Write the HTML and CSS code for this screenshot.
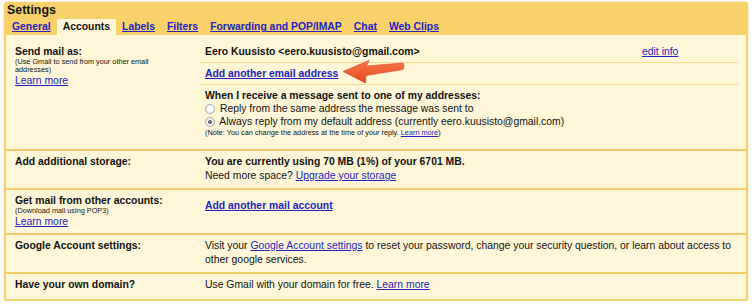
FILE: index.html
```html
<!DOCTYPE html>
<html lang="en">
<head>
  <meta charset="UTF-8">
  <title>Settings - Accounts</title>
  <link rel="stylesheet" href="styles.css">
</head>
<body>
  <div class="settings">
    <div class="settings-title">Settings</div>
    <div class="tabs">
      <a class="tab" href="#">General</a>
      <span class="tab tab-active">Accounts</span>
      <a class="tab" href="#">Labels</a>
      <a class="tab" href="#">Filters</a>
      <a class="tab" href="#">Forwarding and POP/IMAP</a>
      <a class="tab" href="#">Chat</a>
      <a class="tab" href="#">Web Clips</a>
    </div>

    <div class="panel">
      <!-- Send mail as -->
      <div class="row row-send">
        <div class="row-label">
          <div class="label-title">Send mail as:</div>
          <div class="hint">(Use Gmail to send from your other email addresses)</div>
          <a class="label-link" href="#">Learn more</a>
        </div>
        <div class="row-value">
          <div class="sub sub-address">
            <b>Eero Kuusisto &lt;eero.kuusisto@gmail.com&gt;</b>
            <a href="#">edit info</a>
          </div>
          <div class="sub sub-add">
            <a class="strong-link" href="#">Add another email address</a>
          </div>
          <div class="sub sub-reply">
            <div class="reply-title">When I receive a message sent to one of my addresses:</div>
            <label class="radio-line"><input type="radio" name="reply"> Reply from the same address the message was sent to</label>
            <label class="radio-line"><input type="radio" name="reply" checked> Always reply from my default address (currently eero.kuusisto@gmail.com)</label>
            <div class="hint">(Note: You can change the address at the time of your reply. <a href="#">Learn more</a>)</div>
          </div>
        </div>
      </div>

      <!-- Storage -->
      <div class="row">
        <div class="row-label">
          <div class="label-title">Add additional storage:</div>
        </div>
        <div class="row-value">
          <b>You are currently using 70 MB (1%) of your 6701 MB.</b><br>
          Need more space? <a href="#">Upgrade your storage</a>
        </div>
      </div>

      <!-- POP3 -->
      <div class="row">
        <div class="row-label">
          <div class="label-title">Get mail from other accounts:</div>
          <div class="hint">(Download mail using POP3)</div>
          <a class="label-link" href="#">Learn more</a>
        </div>
        <div class="row-value row-value-pop">
          <a class="strong-link" href="#">Add another mail account</a>
        </div>
      </div>

      <!-- Google account -->
      <div class="row">
        <div class="row-label">
          <div class="label-title">Google Account settings:</div>
        </div>
        <div class="row-value">
          <span>Visit your</span> <a href="#">Google Account settings</a> <span>to reset your password, change your security question, or learn about access to other google services.</span>
        </div>
      </div>

      <!-- Domain -->
      <div class="row row-last">
        <div class="row-label">
          <div class="label-title">Have your own domain?</div>
        </div>
        <div class="row-value">
          Use Gmail with your domain for free. <a href="#">Learn more</a>
        </div>
      </div>

      <svg class="callout-arrow" width="64" height="26" viewBox="0 0 64 26">
        <defs>
          <linearGradient id="arrowFill" x1="0" y1="0" x2="0" y2="1">
            <stop offset="0" stop-color="#f8794a"/>
            <stop offset="1" stop-color="#e6461f"/>
          </linearGradient>
        </defs>
        <path d="M1,12.5 L27,1.5 L24.5,7 L61,4 Q63,7 61,10.5 L24,16.5 L23.5,24 Z" fill="url(#arrowFill)" stroke="#d9431d" stroke-width="0.6" stroke-linejoin="round"/>
      </svg>
    </div>
  </div>
</body>
</html>
```

FILE: styles.css
```css
:root {
  --gold: #f9d16b;
  --cream: #fff7d7;
  --rule: #f4cd6a;
  --rule-light: #f7dc90;
  --link: #2222c4;
  --text: #111111;
}

body {
  margin: 0;
  padding: 2px 4px 0 4px;
  background-color: #ffffff;
  font-family: "Liberation Sans", Arial, Helvetica, sans-serif;
  font-size: 10.4px;
  color: var(--text);
}

a {
  color: var(--link);
}

.settings {
  background-color: var(--gold);
  border-radius: 3px;
  padding: 0 2px 2px 2px;
  box-shadow: 0 0 2px rgba(214, 168, 60, 0.6);
}

.settings-title {
  font-size: 12.4px;
  font-weight: bold;
  line-height: 14px;
  padding: 1px 0 2px 1px;
}

.tabs {
  display: flex;
  height: 16px;
}

.tab {
  padding: 0 6px;
  line-height: 16px;
  font-weight: bold;
}

.tab-active {
  background-color: var(--cream);
  color: var(--text);
}

.panel {
  position: relative;
  background-color: var(--cream);
}

.row {
  display: grid;
  grid-template-columns: 194px 1fr;
  border-top: 2px solid var(--rule);
}

.row-send {
  border-top: none;
}

.row-label {
  padding: 4px 8px 5px 9px;
  line-height: 13px;
}

.label-title {
  font-weight: bold;
}

.hint {
  font-size: 7.3px;
  line-height: 8px;
  max-width: 140px;
}

.row-value {
  padding: 4px 8px 5px 5px;
  line-height: 14px;
}

.row-last .row-label,
.row-last .row-value {
  padding-bottom: 7px;
}

.row-value-pop {
  padding-top: 9px;
}

.strong-link {
  font-weight: bold;
}

/* Send mail as: value column is split into sub rows */
.row-send .row-label {
  padding-top: 10px;
}

.row-send .row-value {
  padding: 0 8px 0 0;
}

.sub {
  padding-left: 5px;
  border-bottom: 1px solid var(--rule-light);
}

.sub-address {
  display: grid;
  grid-template-columns: 1fr 96px;
  padding-top: 10px;
  padding-bottom: 3px;
}

.sub-add {
  padding-top: 4px;
  padding-bottom: 3px;
}

.sub-reply {
  border-bottom: none;
  padding-top: 5px;
  padding-bottom: 12px;
}

.reply-title {
  font-weight: bold;
  line-height: 12px;
}

.radio-line {
  display: block;
  line-height: 13px;
}

.radio-line input {
  appearance: none;
  -webkit-appearance: none;
  width: 10px;
  height: 10px;
  margin: 0 2px 0 0;
  border: 1px solid #a9a9a9;
  border-radius: 50%;
  background: radial-gradient(circle at 50% 40%, #ffffff 0, #ffffff 45%, #e4e4e4 100%);
  vertical-align: -2px;
  box-sizing: border-box;
}

.radio-line input:checked {
  background: radial-gradient(circle, #6f6f6f 0, #6f6f6f 1.6px, #f4f4f4 2.2px, #e4e4e4 100%);
}

.sub-reply .hint {
  max-width: none;
  line-height: 9px;
}

.callout-arrow {
  position: absolute;
  left: 336px;
  top: 24px;
}
```
